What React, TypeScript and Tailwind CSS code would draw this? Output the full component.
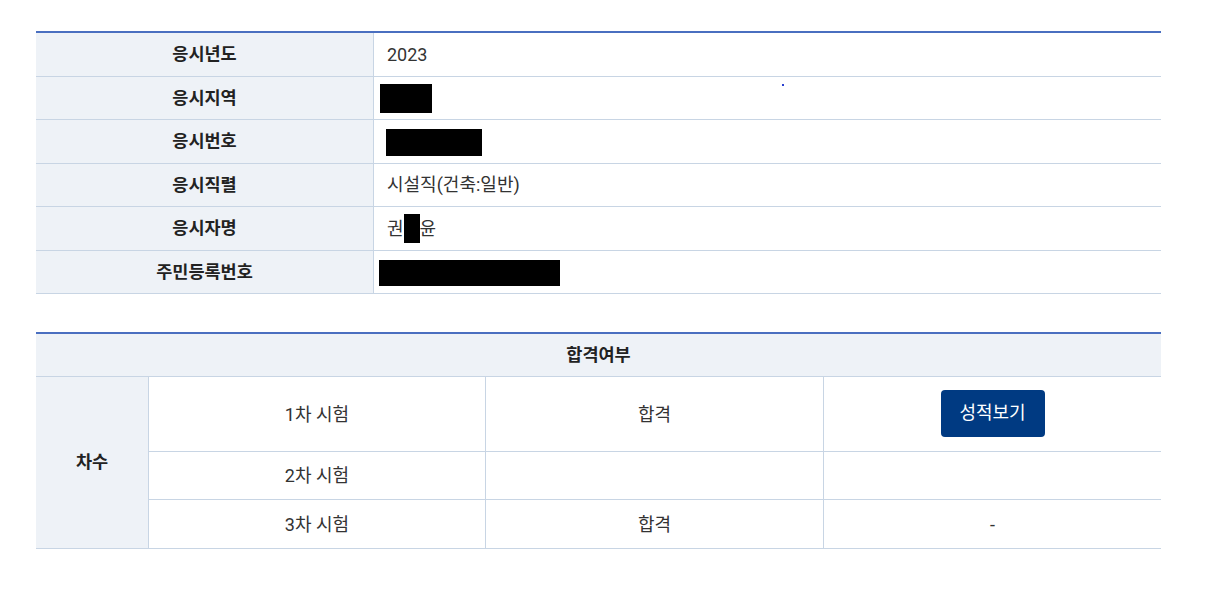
const font = { fontFamily: 'Roboto, "Noto Sans CJK KR", "Noto Sans", sans-serif' };

const infoRows = [
  { label: '응시년도', value: <span>2023</span> },
  { label: '응시지역', value: <span className="ml-[-7px] mt-[2px] block h-[29px] w-[52px] bg-black" /> },
  { label: '응시번호', value: <span className="ml-[-1px] mt-[2px] block h-[27px] w-[96px] bg-black" /> },
  { label: '응시직렬', value: <span>시설직(건축:일반)</span> },
  {
    label: '응시자명',
    value: (
      <span className="flex items-center">
        권<span className="inline-block h-[29px] w-[16px] bg-black" />윤
      </span>
    ),
  },
  { label: '주민등록번호', value: <span className="ml-[-8px] mt-[2px] block h-[26px] w-[181px] bg-black" /> },
];

const rounds = [
  { name: '1차 시험', result: '합격', action: 'button', h: 'h-[75px]' },
  { name: '2차 시험', result: '', action: '', h: 'h-[48px]' },
  { name: '3차 시험', result: '합격', action: '-', h: 'h-[49px]' },
];

export default function App() {
  return (
    <div className="relative min-h-[595px] w-[1205px] bg-white text-[18px] text-[#333]" style={font}>
      <div className="ml-[36px] w-[1125px] pt-[31px]">
        <div className="border-t-2 border-[#4a6fc0]">
          {infoRows.map((row) => (
            <div key={row.label} className="flex h-[43.5px] border-b border-[#c8d5e4]">
              <div className="flex w-[338px] items-center justify-center border-r border-[#c8d5e4] text-[17.5px] font-bold text-[#222] bg-[#eef2f7]">
                {row.label}
              </div>
              <div className="flex flex-1 items-center pl-[13px]">{row.value}</div>
            </div>
          ))}
        </div>

        <div className="mt-[38px] border-t-2 border-[#4a6fc0]">
          <div className="flex h-[43px] items-center justify-center border-b border-[#c8d5e4] bg-[#eef2f7] text-[17.5px] font-bold text-[#222]">
            합격여부
          </div>
          <div className="flex">
            <div className="flex w-[113px] items-center justify-center border-r border-b border-[#c8d5e4] bg-[#eef2f7] pb-[1px] text-[17.5px] font-bold text-[#222]">
              차수
            </div>
            <div className="flex-1">
              {rounds.map((r) => (
                <div key={r.name} className={`flex border-b border-[#c8d5e4] ${r.h}`}>
                  <div className="flex w-[337px] items-center justify-center border-r border-[#c8d5e4]">{r.name}</div>
                  <div className="flex w-[338px] items-center justify-center border-r border-[#c8d5e4]">{r.result}</div>
                  <div className="flex flex-1 items-center justify-center pb-[2px]">
                    {r.action === 'button' ? (
                      <button className="h-[47px] w-[104px] rounded-[4px] bg-[#003a82] pb-[2px] text-[18px] text-white">
                        성적보기
                      </button>
                    ) : (
                      <span className="pt-[2px]">{r.action}</span>
                    )}
                  </div>
                </div>
              ))}
            </div>
          </div>
        </div>
      </div>
      <span className="absolute left-[782px] top-[84px] h-[2px] w-[2px] bg-[#2a3fd0]" />
    </div>
  );
}
